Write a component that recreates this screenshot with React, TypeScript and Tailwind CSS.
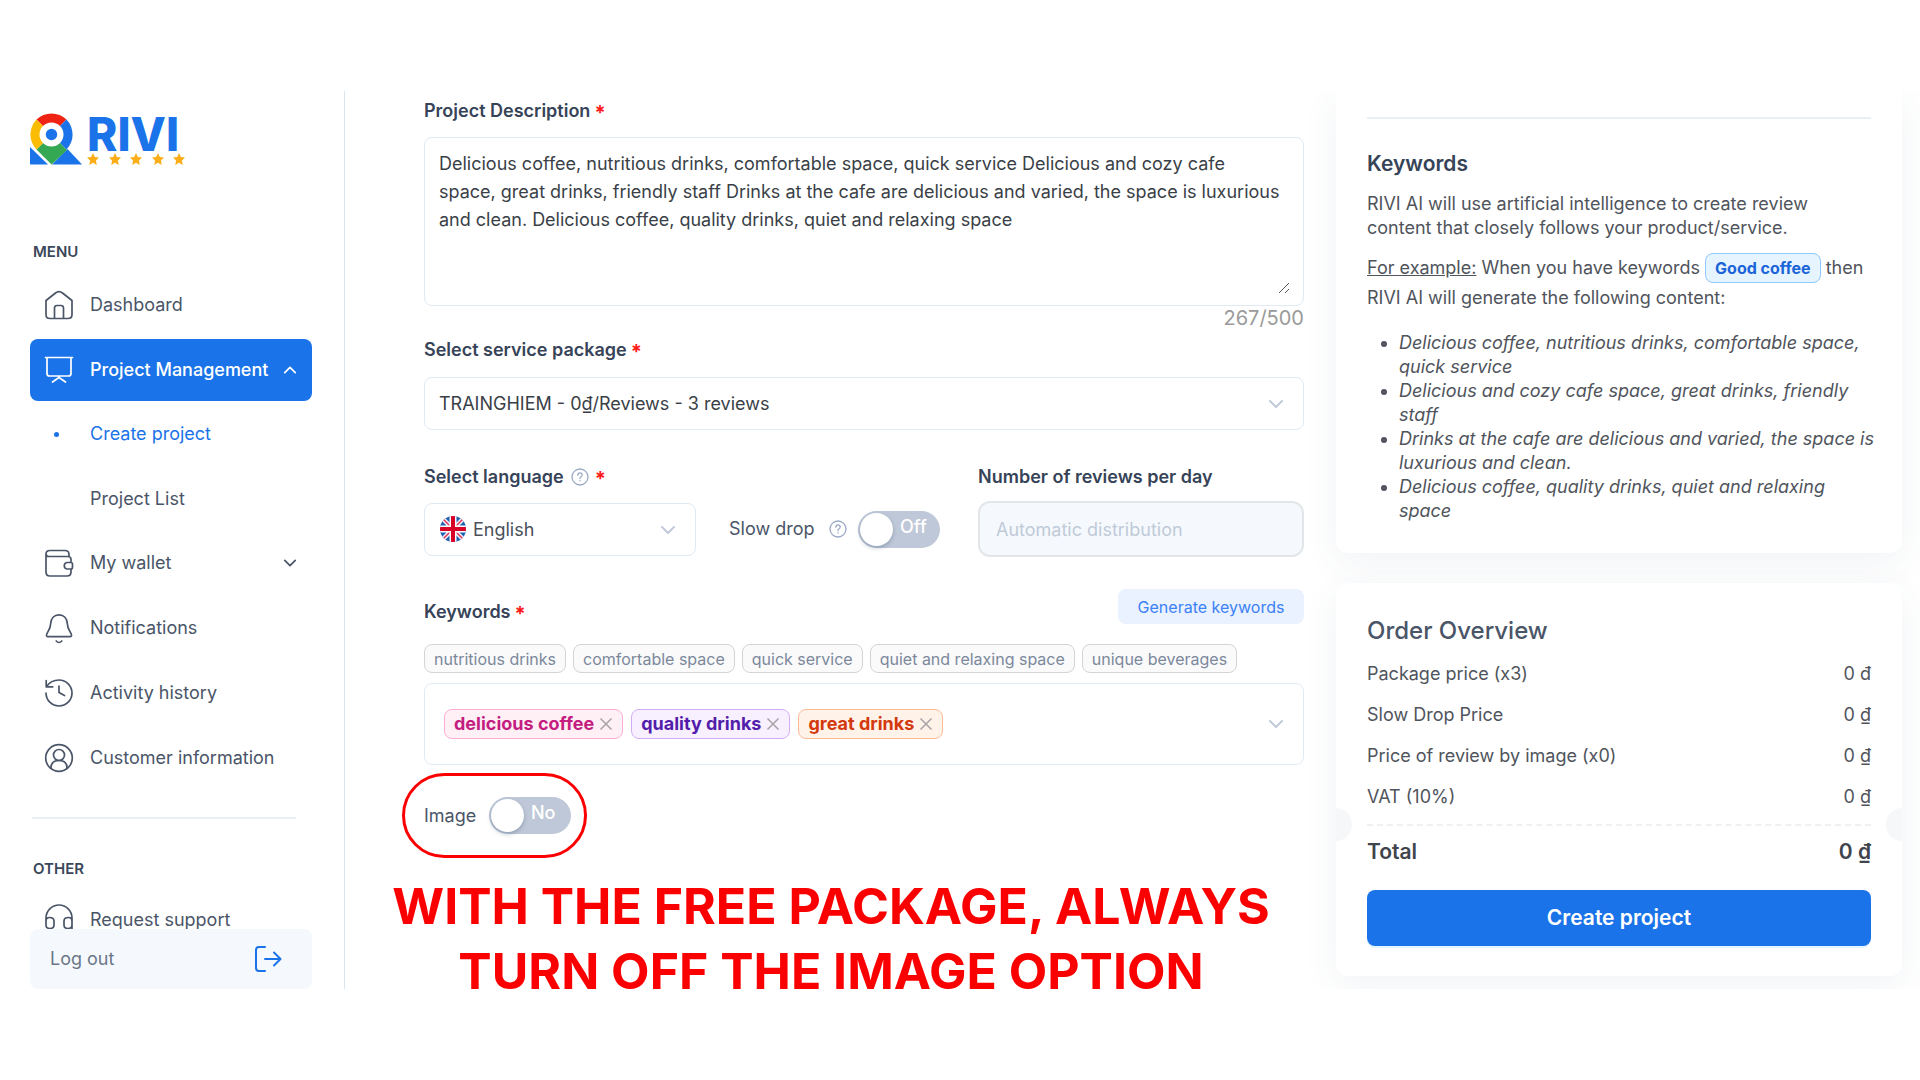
import React, { useState } from 'react';

const ICON_PROPS = { viewBox: '0 0 28 28', fill: 'none', stroke: 'currentColor', strokeWidth: 1.7, strokeLinecap: 'round', strokeLinejoin: 'round' } as const;

const icons: Record<string, React.ReactNode> = {
    home: <path d="M1 9.5 10.5 2Q14 -.8 17.500 2L27 9.500V23.500Q27 27.500 23 27.500H5Q1 27.500 1 23.500ZM9.500 27V17Q9.500 14.500 12 14.500H16Q18.500 14.500 18.500 17V27" />,
    board: <path d="M.5 1.500H27.500M2 1.500V17.500Q2 20 4.500 20H23.500Q26 20 26 17.500V1.500M14 20V22M14 21.500 7.500 26M14 21.500 20.500 26" />,
    wallet: <path d="M1 5V23Q1 27 5 27H22Q26 27 26 23V20M1 5Q1 1.500 5 1.500H20Q24 1.500 24 5.500V7.500H4M1 5Q1 7.500 4 7.500H23Q26 7.500 26 10.500V13.500M26 13.500H22A3.300 3.300 0 0 0 22 20H26Q27.500 20 27.500 18V15.500Q27.500 13.500 26 13.500Z" />,
    bell: <path d="M14 .8C9 .8 6 4.500 5.700 9.500C5.500 15 3 17 1.800 20C1 22 1.800 22.700 3 22.700H25C26.200 22.700 27 22 26.200 20C25 17 22.500 15 22.300 9.500C22 4.500 19 .8 14 .8ZM11.200 27Q14 30 16.800 27" />,
    history: <path d="M1.200 1.500V7.800H7.800M1.500 7.500Q6 1 14 1A13 13 0 1 1 1 14M14 7V13.500L19.500 16.500" />,
    user: <><circle cx="14" cy="14" r="13.300" /><circle cx="14" cy="11" r="5.500" /><path d="M6 24Q6 16.500 14 16.500T22 24" /></>,
    headset: <path d="M1 18V12A13 13 0 0 1 27 12V18M1 15Q1 11.500 4.500 11.500 9 11.500 9 15V19Q9 22.500 5 22.500 1 22.500 1 19ZM27 15Q27 11.500 23.500 11.500 19 11.500 19 15V19Q19 22.500 23 22.500 27 22.500 27 19ZM27 18V26" />,
};

const Icon: React.FC<{ name: string }> = ({ name }) => (
    <svg {...ICON_PROPS} className="w-7 h-7 shrink-0 overflow-visible" aria-hidden="true">{icons[name]}</svg>
);

const Chevron: React.FC<{ className?: string; up?: boolean }> = ({ className = 'w-4', up }) => (
    <svg viewBox="0 0 16 10" fill="none" stroke="currentColor" strokeWidth={2} strokeLinecap="round" strokeLinejoin="round" className={`h-[10px] shrink-0 ${className}`} aria-hidden="true">
        <path d={up ? 'M2 8 8 2 14 8' : 'M2 2 8 8 14 2'} />
    </svg>
);

const Star: React.FC = () => (
    <svg viewBox="0 0 24 24" fill="#fbae17" className="w-3 h-3" aria-hidden="true">
        <path d="m12 0 3.700 7.900 8.300 1.100-6.100 6 1.600 8.800L12 19.500l-7.500 4.300 1.600-8.800L0 9l8.300-1.100z" />
    </svg>
);

const Logo: React.FC = () => (
    <a href="#" className="flex items-end w-fit gap-[5px] h-[52px]" aria-label="RIVI">
        <svg viewBox="0 0 52 52" className="w-[52px] h-[52px]" aria-hidden="true">
            <path d="M0 34 18 51.500H0Z" fill="#1a73e8" />
            <path d="M37.500 36 52 51.500H22Z" fill="#1a73e8" />
            <path d="M21.500 51.500 6.500 36.500 14 29H29L37 37Z" fill="#34a853" />
            <path d="M6.500 6.500A21.500 21.500 0 0 1 36.500 6.500L28 15H15Z" fill="#ee2314" />
            <path d="M6.500 6.500A21.500 21.500 0 0 0 6.500 36.500L15 28V15Z" fill="#fbbc04" />
            <path d="M36.500 6.500A21.500 21.500 0 0 1 36.500 36.500L28 28V15Z" fill="#1a73e8" />
            <circle cx="21.500" cy="21.500" r="12" fill="#fff" />
            <circle cx="21.500" cy="21.500" r="5.700" fill="#1a73e8" />
        </svg>
        <span className="flex flex-col">
            <span className="font-extrabold text-[46px] leading-[37px] text-[#1a73e8]">RIVI</span>
            <span className="flex justify-between w-[98px]"><Star /><Star /><Star /><Star /><Star /></span>
        </span>
    </a>
);

const HelpIcon: React.FC = () => (
    <svg viewBox="0 0 18 18" fill="none" stroke="#9aa9c4" strokeWidth={1.300} strokeLinecap="round" className="w-[18px] h-[18px] shrink-0" aria-hidden="true">
        <circle cx="9" cy="9" r="8" />
        <path d="M6.800 7.200Q6.900 4.900 9 4.900T11.200 6.900Q11.200 8 10 8.700 9 9.300 9 10.500M9 12.700V12.900" />
    </svg>
);

const UkFlag: React.FC = () => (
    <svg viewBox="0 0 26 26" className="absolute left-4 top-[13px] w-[26px] h-[26px] pointer-events-none" aria-hidden="true">
        <clipPath id="flag"><circle cx="13" cy="13" r="13" /></clipPath>
        <g clipPath="url(#flag)">
            <rect width="26" height="26" fill="#1f5fae" />
            <path d="M2 2 24 24M24 2 2 24" stroke="#f3f3f6" strokeWidth="4.500" />
            <path d="M2 2 24 24M24 2 2 24" stroke="#e1325a" strokeWidth="1.500" />
            <path d="M13 0V26M0 13H26" stroke="#fff" strokeWidth="7" />
            <path d="M13 0V26M0 13H26" stroke="#d80027" strokeWidth="4" />
        </g>
    </svg>
);

const Required = () => <span className="mt-1 ml-1 text-xl leading-5 font-bold text-[#ff1a1a]">*</span>;

const Switch: React.FC<{ id: string; on: string; off: string }> = ({ id, on, off }) => {
    const [checked, setChecked] = useState(false);
    return (
        <span className="relative inline-flex">
            <input
                id={id}
                type="checkbox"
                role="switch"
                checked={checked}
                onChange={(e) => setChecked(e.target.checked)}
                className="peer appearance-none w-[82px] h-[37px] rounded-full bg-[#bfc8d8] checked:bg-[#1a73e8] cursor-pointer"
            />
            <span className="absolute left-[2px] top-[2px] w-[33px] h-[33px] rounded-full bg-white shadow-[0_2px_4px_rgba(0,35,70,0.25)] pointer-events-none peer-checked:left-[47px]"></span>
            <span className="absolute left-[42px] top-1 leading-6 font-medium text-white pointer-events-none peer-checked:left-3">{checked ? on : off}</span>
        </span>
    );
};

const suggestions = ['nutritious drinks', 'comfortable space', 'quick service', 'quiet and relaxing space', 'unique beverages'];

const initialKeywords = [
    { text: 'delicious coffee', style: 'bg-[#fff0f6] border-[#ffadd2] text-[#c41d7f]' },
    { text: 'quality drinks', style: 'bg-[#f9f0ff] border-[#d3adf7] text-[#531dab]' },
    { text: 'great drinks', style: 'bg-[#fff2e8] border-[#ffbb96] text-[#d4380d]' },
];

const examples = [
    'Delicious coffee, nutritious drinks, comfortable space, quick service',
    'Delicious and cozy cafe space, great drinks, friendly staff',
    'Drinks at the cafe are delicious and varied, the space is luxurious and clean.',
    'Delicious coffee, quality drinks, quiet and relaxing space',
];

const prices = [
    { label: 'Package price (x3)', value: '0 đ' },
    { label: 'Slow Drop Price', value: '0 ₫' },
    { label: 'Price of review by image (x0)', value: '0 ₫' },
    { label: 'VAT (10%)', value: '0 ₫' },
];

const rowClass = 'flex items-center h-[62px] px-[15px] gap-[17px] rounded-lg';

const Sidebar: React.FC = () => (
    <aside className="relative w-[345px] shrink-0 h-full overflow-hidden border-r border-[#dbe5ee] pl-[30px] pr-8 pt-[22px]">
        <Logo />
        <h2 className="mt-[75px] ml-[3px] text-[15px] leading-6 font-semibold text-[#3b475a]">MENU</h2>
        <nav className="mt-[10px] flex flex-col gap-[3px]">
            <a href="#" className={rowClass}><Icon name="home" />Dashboard</a>
            <button className={`${rowClass} bg-[#1a73e8] text-white font-medium`}>
                <Icon name="board" />
                <span className="flex-1 text-left whitespace-nowrap">Project Management</span>
                <Chevron up className="w-[14px] -ml-2" />
            </button>
            <div className="flex flex-col gap-[5px]">
                <a href="#" className="flex items-center h-[60px] pl-6 gap-[31px] text-[#1a73e8]">
                    <span className="w-[5px] h-[5px] rounded-full bg-[#1a73e8]"></span>
                    Create project
                </a>
                <a href="#" className="flex items-center h-[60px] pl-[60px]">Project List</a>
            </div>
            <button className={rowClass}>
                <Icon name="wallet" />
                <span className="flex-1 text-left">My wallet</span>
                <Chevron className="w-[14px]" />
            </button>
            <a href="#" className={rowClass}><Icon name="bell" />Notifications</a>
            <a href="#" className={rowClass}><Icon name="history" />Activity history</a>
            <a href="#" className={rowClass}><Icon name="user" />Customer information</a>
        </nav>
        <hr className="mt-7 ml-[2px] mr-4 border-t-2 border-[#e9eff5]" />
        <h2 className="mt-[38px] ml-[3px] text-[15px] leading-6 font-semibold text-[#3b475a]">OTHER</h2>
        <a href="#" className={`${rowClass} mt-2`}><Icon name="headset" />Request support</a>

        <button className="absolute left-[30px] right-8 bottom-0 h-[60px] px-5 flex items-center justify-between rounded-lg bg-[#f5f9fd] text-[#6b7688]">
            Log out
            <svg viewBox="0 0 28 28" fill="none" stroke="#1a73e8" strokeWidth={2} strokeLinecap="round" strokeLinejoin="round" className="w-7 h-7 mr-[10px]" aria-hidden="true">
                <path d="M11 2H5Q2 2 2 5V23Q2 26 5 26H11M11 14H26M20 7.500 26.500 14 20 20.500" />
            </svg>
        </button>
    </aside>
);

const ProjectForm: React.FC = () => {
    const [description, setDescription] = useState(
        'Delicious coffee, nutritious drinks, comfortable space, quick service Delicious and cozy cafe space, great drinks, friendly staff Drinks at the cafe are delicious and varied, the space is luxurious and clean. Delicious coffee, quality drinks, quiet and relaxing space'
    );
    const [keywords, setKeywords] = useState(initialKeywords);
    const labelClass = 'flex items-center leading-6 font-semibold text-[#364358]';
    const boxClass = 'border border-[#e0eaf3] rounded-lg';

    return (
        <form className="flex-1 min-w-0 pl-[79px] pt-2" onSubmit={(e) => e.preventDefault()}>
            <label htmlFor="description" className={labelClass}>Project Description<Required /></label>
            <div className="relative mt-[14px]">
                <textarea
                    id="description"
                    value={description}
                    onChange={(e) => setDescription(e.target.value)}
                    className={`block w-full h-[169px] pl-[14px] pr-5 py-3 leading-7 text-[#3a3f47] resize-none ${boxClass}`}
                />
                <svg viewBox="0 0 12 12" stroke="#555" className="absolute right-[14px] bottom-3 w-3 h-3" aria-hidden="true"><path d="M1 11 11 1M7 11 11 7" /></svg>
            </div>
            <div className="leading-6 text-right text-[#9a9a9a] text-xl">267/500</div>

            <label htmlFor="package" className={`${labelClass} mt-2`}>Select service package<Required /></label>
            <div className="relative mt-[15px]">
                <select id="package" className={`appearance-none w-full h-[53px] px-[14px] text-[#3a3f47] bg-white ${boxClass}`}>
                    <option>TRAINGHIEM - 0₫/Reviews - 3 reviews</option>
                </select>
                <Chevron className="w-4 absolute right-5 top-[22px] text-[#c0cad8] pointer-events-none" />
            </div>

            <div className="mt-[35px] flex items-start">
                <div className="w-[272px]">
                    <label htmlFor="language" className={labelClass}>Select language<span className="ml-[7px] mr-[2px]"><HelpIcon /></span><Required /></label>
                    <div className="relative mt-[14px]">
                        <select id="language" className={`appearance-none w-full h-[53px] pl-12 pr-10 text-[#4a4f58] bg-white ${boxClass}`}>
                            <option>English</option>
                        </select>
                        <UkFlag />
                        <Chevron className="w-4 absolute right-5 top-[22px] text-[#c0cad8] pointer-events-none" />
                    </div>
                </div>
                <div className="self-end h-[56px] ml-[33px] flex items-center">
                    <label htmlFor="slow-drop" className="flex items-center justify-between w-[118px]">Slow drop<HelpIcon /></label>
                    <span className="ml-[11px] flex"><Switch id="slow-drop" on="On" off="Off" /></span>
                </div>
                <div className="flex-1 ml-[38px]">
                    <label htmlFor="per-day" className={labelClass}>Number of reviews per day</label>
                    <input
                        id="per-day"
                        disabled
                        placeholder="Automatic distribution"
                        className="w-full h-[56px] mt-3 px-4 bg-[#f5f9fd] border-2 border-[#e3e6e9] rounded-xl placeholder:text-[#c0cad8]"
                    />
                </div>
            </div>

            <div className="mt-8 h-[35px] flex items-end justify-between">
                <label htmlFor="keywords" className={labelClass}>Keywords<Required /></label>
                <button className="h-[35px] w-[186px] rounded-lg bg-[#eaf1ff] text-base text-[#3b82f6]">Generate keywords</button>
            </div>
            <div className="mt-5 flex gap-[7px]">
                {suggestions.map((s) => (
                    <button key={s} className="h-[29px] px-[9px] text-base leading-6 whitespace-nowrap text-[#7c889c] bg-[#fafafa] border border-[#d4d4d4] rounded-lg">{s}</button>
                ))}
            </div>
            <div className={`mt-[10px] h-[82px] px-[19px] flex items-center gap-2 ${boxClass}`}>
                {keywords.map((k) => (
                    <span key={k.text} className={`flex items-center h-[30px] px-[9px] gap-[5px] font-bold whitespace-nowrap border rounded-lg ${k.style}`}>
                        {k.text}
                        <button aria-label={`Remove ${k.text}`} onClick={() => setKeywords(keywords.filter((x) => x !== k))}>
                            <svg viewBox="0 0 14 14" stroke="#a9a2a6" strokeWidth={1.500} className="w-[14px] h-[14px]" aria-hidden="true"><path d="M1.500 1.500 12.500 12.500M12.500 1.500 1.500 12.500" /></svg>
                        </button>
                    </span>
                ))}
                <input id="keywords" className="flex-1 min-w-0 outline-none" />
                <Chevron className="w-4 text-[#c0cad8]" />
            </div>

            <div className="mt-2 -ml-[22px] w-fit h-[85px] pl-[19px] pr-[13px] flex items-center gap-[10px] border-[3px] border-[#fb0000] rounded-full">
                <label htmlFor="image" className="w-[55px]">Image</label>
                <Switch id="image" on="Yes" off="No" />
            </div>
            <p className="mt-4 -ml-[66px] text-center font-bold text-[50px] leading-[65px] text-[#fb0000]">
                WITH THE FREE PACKAGE, ALWAYS<br />TURN OFF THE IMAGE OPTION
            </p>
        </form>
    );
};

const cardClass = 'bg-white shadow-[0_10px_36px_rgba(60,90,120,0.07)] px-[31px] pb-[30px]';

const SummaryColumn: React.FC = () => (
    <div className="w-[616px] shrink-0 h-full overflow-hidden pl-8 pr-[18px] text-[#50545c]">
        {/* Keyword guide */}
        <section className={`${cardClass} rounded-b-xl pt-[26px]`}>
            <hr className="border-t-2 border-[#e9eff5]" />
            <h2 className="mt-[31px] text-[21px] leading-7 font-semibold text-[#364358]">Keywords</h2>
            <p className="mt-[14px] leading-6">RIVI AI will use artificial intelligence to create review content that closely follows your product/service.</p>
            <p className="mt-[13px] leading-[30px]">
                <u>For example:</u> When you have keywords{' '}
                <span className="px-[9px] py-1 text-base font-bold text-[#1a63d8] bg-[#e6f4ff] border border-[#91caff] rounded-lg">Good coffee</span>
                {' '}then RIVI AI will generate the following content:
            </p>
            <ul className="mt-[18px] -mr-2 pl-8 list-disc italic leading-6">
                {examples.map((e) => <li key={e}>{e}</li>)}
            </ul>
        </section>

        {/* Order overview */}
        <section className={`${cardClass} rounded-xl mt-[30px] pt-[34px]`}>
            <h2 className="text-2xl leading-7 font-medium text-[#4a5568]">Order Overview</h2>
            <dl className="mt-[17px] flex flex-col gap-[17px] leading-6">
                {prices.map((p) => (
                    <div key={p.label} className="flex justify-between">
                        <dt>{p.label}</dt>
                        <dd>{p.value}</dd>
                    </div>
                ))}
            </dl>
            <div className="relative mt-[15px] -mx-[31px] px-[31px]">
                <span className="absolute left-0 -top-4 w-4 h-[33px] rounded-r-full bg-[#f5f7f9]"></span>
                <span className="absolute right-0 -top-4 w-4 h-[33px] rounded-l-full bg-[#f5f7f9]"></span>
                <hr className="border-t-2 border-dashed border-[#f0f0f0]" />
            </div>
            <div className="mt-3 flex justify-between text-[21px] leading-7 font-semibold text-[#40444c]">
                <span>Total</span>
                <span>0 ₫</span>
            </div>
            <button className="mt-6 w-full h-[56px] rounded-lg bg-[#1a73e8] text-[21px] font-semibold text-white shadow-[0_2px_0_#e6f4ff]">Create project</button>
        </section>
    </div>
);

const App: React.FC = () => (
    <div className="h-screen py-[91px] bg-white font-['Inter',sans-serif] text-lg text-[#4a5568]">
        <div className="h-full flex">
            <Sidebar />
            <ProjectForm />
            <SummaryColumn />
        </div>
    </div>
);

export default App;
